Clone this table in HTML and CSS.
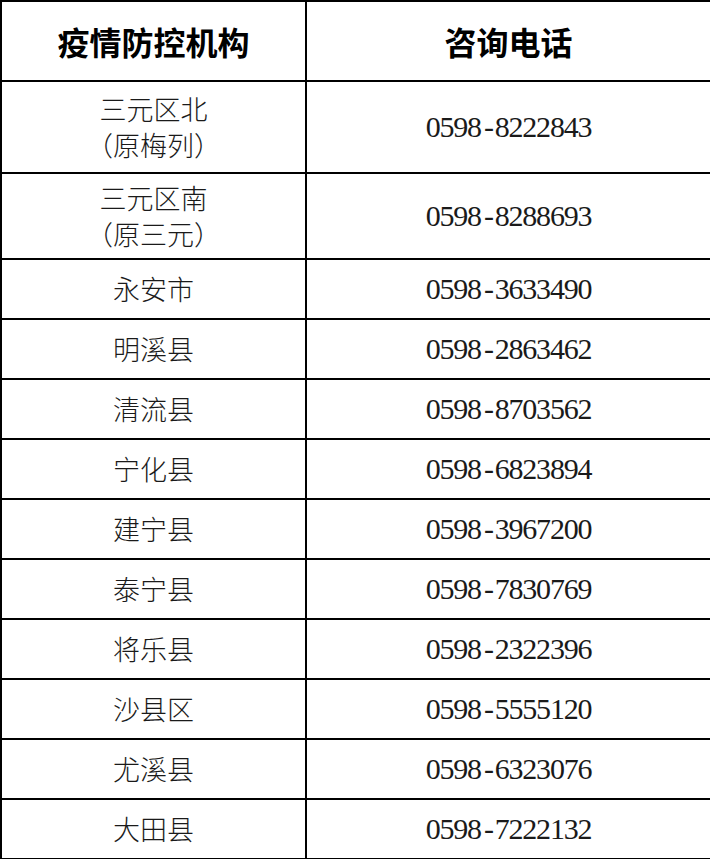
FILE: index.html
```html
<!DOCTYPE html>
<html lang="zh-CN">
<head>
<meta charset="utf-8">
<title>疫情防控机构咨询电话</title>
<link rel="stylesheet" href="styles.css">
</head>
<body>
<table class="contacts">
  <colgroup>
    <col class="col-org">
    <col class="col-tel">
  </colgroup>
  <thead>
    <tr class="row-head">
      <th>疫情防控机构</th>
      <th>咨询电话</th>
    </tr>
  </thead>
  <tbody>
    <tr class="row-tall-a"><td class="org">三元区北<br>（原梅列）</td><td class="tel">0598<span class="dash">-</span>8222843</td></tr>
    <tr class="row-tall-b"><td class="org">三元区南<br>（原三元）</td><td class="tel">0598<span class="dash">-</span>8288693</td></tr>
    <tr><td class="org">永安市</td><td class="tel">0598<span class="dash">-</span>3633490</td></tr>
    <tr><td class="org">明溪县</td><td class="tel">0598<span class="dash">-</span>2863462</td></tr>
    <tr><td class="org">清流县</td><td class="tel">0598<span class="dash">-</span>8703562</td></tr>
    <tr><td class="org">宁化县</td><td class="tel">0598<span class="dash">-</span>6823894</td></tr>
    <tr><td class="org">建宁县</td><td class="tel">0598<span class="dash">-</span>3967200</td></tr>
    <tr><td class="org">泰宁县</td><td class="tel">0598<span class="dash">-</span>7830769</td></tr>
    <tr><td class="org">将乐县</td><td class="tel">0598<span class="dash">-</span>2322396</td></tr>
    <tr><td class="org">沙县区</td><td class="tel">0598<span class="dash">-</span>5555120</td></tr>
    <tr><td class="org">尤溪县</td><td class="tel">0598<span class="dash">-</span>6323076</td></tr>
    <tr><td class="org">大田县</td><td class="tel">0598<span class="dash">-</span>7222132</td></tr>
  </tbody>
</table>
</body>
</html>
```
FILE: styles.css
```css
html, body {
  margin: 0;
  padding: 0;
  background: #ffffff;
}

.contacts {
  width: 710px;
  border-collapse: collapse;
  table-layout: fixed;
  font-family: "Noto Sans CJK SC", "Noto Sans", sans-serif;
  color: #1a1a1a;
}

.col-org { width: 305px; }
.col-tel { width: 405px; }

.contacts th,
.contacts td {
  border: 2px solid #000000;
  padding: 0;
  text-align: center;
  vertical-align: middle;
}

.row-head { height: 80px; }
.contacts tbody tr { height: 60px; }
.contacts tbody tr.row-tall-a { height: 92px; }
.contacts tbody tr.row-tall-b { height: 86px; }

.contacts th {
  font-size: 32px;
  font-weight: 700;
  color: #000000;
  line-height: 40px;
}

.org {
  font-size: 27px;
  font-weight: 300;
  line-height: 36px;
}

.tel {
  font-family: "Liberation Serif", "Times New Roman", serif;
  font-size: 30px;
  line-height: 36px;
  letter-spacing: -1.2px;
  padding-top: 4px;
}

.dash {
  padding: 0 2px 0 3px;
}
```
